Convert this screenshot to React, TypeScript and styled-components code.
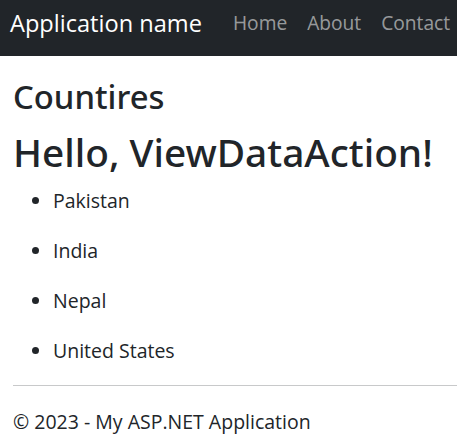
import React from "react";
import styled, { createGlobalStyle } from "styled-components";

const Global = createGlobalStyle`
  html, body { margin: 0; padding: 0; background: #ffffff; }
  body {
    font-family: "Open Sans", "Noto Sans", "Liberation Sans", sans-serif;
    color: #212529;
    overflow: hidden;
  }
`;

const NavBar = styled.nav`
  height: 56px;
  box-sizing: border-box;
  background: #212529;
  display: flex;
  align-items: flex-start;
  padding: 8px 0 0 10px;
  white-space: nowrap;
`;

const Brand = styled.a`
  font-size: 23.6px;
  line-height: 30px;
  color: #ffffff;
  text-decoration: none;
  margin-right: 21px;
`;

const NavLink = styled.a`
  font-size: 19.2px;
  line-height: 30px;
  color: rgba(255, 255, 255, 0.55);
  text-decoration: none;
  padding: 0 10px;
`;

const Main = styled.main`
  padding: 0 0 0 13px;
`;

const Heading = styled.h2<{ $size: number; $lh: number; $top: number }>`
  font-family: "Noto Sans", "Open Sans", sans-serif;
  font-weight: 500;
  margin: ${(p) => p.$top}px 0 0 0;
  font-size: ${(p) => p.$size}px;
  line-height: ${(p) => p.$lh}px;
`;

const List = styled.ul`
  margin: 10px 0 0 0;
  padding-left: 40px;
  list-style: disc;
`;

const Item = styled.li`
  font-size: 19.5px;
  line-height: 30px;
  margin-bottom: 20px;
  &:last-child { margin-bottom: 0; }
`;

const Rule = styled.hr`
  border: 0;
  height: 1px;
  background: #c8c9ca;
  margin: 19px 0 0 0;
`;

const Footer = styled.footer`
  margin-top: 21px;
  font-size: 19.5px;
  line-height: 30px;
`;

const countries = ["Pakistan", "India", "Nepal", "United States"];

export default function App() {
  return (
    <>
      <Global />
      <NavBar>
        <Brand href="#">Application name</Brand>
        <NavLink href="#">Home</NavLink>
        <NavLink href="#">About</NavLink>
        <NavLink href="#">Contact</NavLink>
      </NavBar>
      <Main>
        <Heading $size={32.8} $lh={40} $top={21}>Countires</Heading>
        <Heading as="h1" $size={38.8} $lh={48} $top={11}>Hello, ViewDataAction!</Heading>
        <List>
          {countries.map((c) => (
            <Item key={c}>{c}</Item>
          ))}
        </List>
        <Rule />
        <Footer>© 2023 - My ASP.NET Application</Footer>
      </Main>
    </>
  );
}
